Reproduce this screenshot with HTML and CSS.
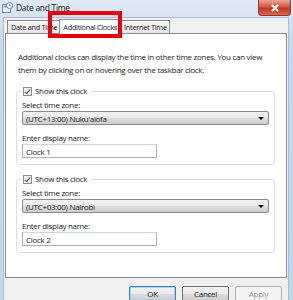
FILE: index.html
```html
<!DOCTYPE html>
<html lang="en">
<head>
  <meta charset="utf-8" />
  <title>Date and Time</title>
  <link rel="stylesheet" href="styles.css">
</head>
<body>
  <div class="window">
    <div class="titlebar">
      <svg class="app-icon" width="11" height="11" viewBox="0 0 11 11">
        <rect x="0.5" y="2.5" width="8" height="8" fill="#e8f1fb" stroke="#6c8fb8"/>
        <rect x="1.5" y="3.5" width="6" height="2" fill="#7aa4d6"/>
        <circle cx="7.5" cy="3.5" r="3" fill="#fff" stroke="#5a7fa8"/>
        <path d="M7.5 2v1.6h1.2" stroke="#5a7fa8" fill="none" stroke-width="0.8"/>
      </svg>
      <span class="title">Date and Time</span>
      <div class="close-btn">
        <svg width="10" height="8" viewBox="0 0 10 8">
          <path d="M2 1l6 6M8 1L2 7" stroke="#fff" stroke-width="2"/>
        </svg>
      </div>
    </div>

    <div class="client">
      <div class="tabs">
        <div class="tab">Date and Time</div>
        <div class="tab active">Additional Clocks</div>
        <div class="tab">Internet Time</div>
      </div>

      <div class="panel">
        <p class="intro">Additional clocks can display the time in other time zones. You can view them by clicking on or hovering over the taskbar clock.</p>

        <fieldset class="group">
          <legend><span class="check"></span>Show this clock</legend>
          <div class="field-label">Select time zone:</div>
          <div class="select">(UTC+13:00) Nuku'alofa<span class="arrow"></span></div>
          <div class="field-label">Enter display name:</div>
          <div class="textbox">Clock 1</div>
        </fieldset>

        <fieldset class="group">
          <legend><span class="check"></span>Show this clock</legend>
          <div class="field-label">Select time zone:</div>
          <div class="select">(UTC+03:00) Nairobi<span class="arrow"></span></div>
          <div class="field-label">Enter display name:</div>
          <div class="textbox">Clock 2</div>
        </fieldset>
      </div>

      <div class="buttons">
        <div class="btn default">OK</div>
        <div class="btn">Cancel</div>
        <div class="btn disabled">Apply</div>
      </div>
    </div>

    <div class="highlight"></div>
  </div>
</body>
</html>
```

FILE: styles.css
```css
* {
  margin: 0;
  padding: 0;
  box-sizing: border-box;
}

body {
  background: #fff;
  font-family: "Open Sans", "Noto Sans", sans-serif;
  font-size: 8px;
  letter-spacing: -0.3px;
  color: #1e1e1e;
}

.window {
  position: relative;
  width: 293px;
  height: 300px;
  overflow: hidden;
  background: linear-gradient(#dfeaf6, #c6d9ee 40px, #c2d6ec);
  padding: 0 4px 0 3px;
  display: flex;
  flex-direction: column;
}

.titlebar {
  height: 17px;
  display: flex;
  align-items: center;
  flex-shrink: 0;
}

.app-icon {
  margin-left: -1px;
  margin-right: 3px;
  margin-top: -3px;
}

.title {
  font-size: 8.5px;
  color: #1b1b1b;
  margin-top: -3px;
}

.close-btn {
  margin-left: auto;
  margin-right: -2px;
  margin-top: -1px;
  width: 33px;
  height: 16px;
  border: 1px solid #8a3a30;
  border-top: none;
  border-radius: 0 0 4px 4px;
  background: linear-gradient(#e8a593, #d35a43 45%, #c2361f 55%, #d56a4e);
  display: flex;
  align-items: center;
  justify-content: center;
}

.client {
  flex: 1;
  background: #f0f0f0;
  border: 1px solid #a9bdd6;
  border-bottom: none;
  padding: 2px 1px 0 1px;
  display: flex;
  flex-direction: column;
}

.tabs {
  display: flex;
  align-items: flex-end;
  height: 13px;
  padding-left: 2px;
  position: relative;
  z-index: 1;
}

.tab {
  height: 13px;
  padding: 0 2px 0 3px;
  border: 1px solid #898c95;
  border-bottom: none;
  border-right: none;
  background: linear-gradient(#f7f7f7, #e6e6e6);
  font-size: 7.4px;
  line-height: 12px;
  color: #1e1e1e;
}

.tab:last-child {
  border-right: 1px solid #898c95;
}

.tab.active {
  height: 15px;
  margin-bottom: -1px;
  background: #fff;
  border-right: 1px solid #898c95;
  padding: 0 3px;
  line-height: 14px;
}

.tab.active + .tab {
  border-left: none;
}

.panel {
  height: 245px;
  background: #fff;
  border: 1px solid #898c95;
  padding: 16px 11px 0 10px;
}

.intro {
  font-size: 8px;
  line-height: 13px;
  color: #1e1e1e;
  padding-left: 2px;
}

.group {
  border: 1px solid #dcdfe6;
  border-radius: 3px;
  padding: 0 5px 6px 5px;
  margin-top: 10px;
}

.group + .group {
  margin-top: 9px;
}

.group legend {
  display: flex;
  align-items: center;
  padding: 0 5px 0 1px;
  font-size: 8px;
  line-height: 10px;
}

.check {
  width: 9px;
  height: 9px;
  border: 1px solid #8f8f8f;
  background: linear-gradient(#f2f2f2, #fff);
  margin-right: 3px;
  position: relative;
}

.check::after {
  content: "";
  position: absolute;
  left: 2px;
  top: 0px;
  width: 2px;
  height: 5px;
  border: solid #3a4f7a;
  border-width: 0 1.5px 1.5px 0;
  transform: rotate(40deg);
}

.field-label {
  font-size: 8px;
  line-height: 10px;
  margin-top: 4px;
  margin-bottom: 1px;
}

.select {
  height: 14px;
  border: 1px solid #8a8a8a;
  border-radius: 2px;
  background: linear-gradient(#f2f2f2, #ebebeb 50%, #dddddd 51%, #cfcfcf);
  display: flex;
  align-items: center;
  padding-left: 3px;
  font-size: 8px;
  margin-bottom: 8px;
}

.arrow {
  margin-left: auto;
  margin-right: 4px;
  width: 0;
  height: 0;
  border-left: 3px solid transparent;
  border-right: 3px solid transparent;
  border-top: 3px solid #000;
}

.textbox {
  width: 135px;
  height: 14px;
  border: 1px solid #abadb3;
  border-top-color: #cfd6e0;
  background: #fff;
  display: flex;
  align-items: center;
  padding-left: 3px;
  font-size: 8px;
}

.buttons {
  display: flex;
  justify-content: flex-end;
  gap: 6px;
  padding: 8px 5px 0 0;
}

.btn {
  width: 47px;
  height: 15px;
  border: 1px solid #707070;
  border-radius: 2px;
  background: linear-gradient(#f2f2f2, #ebebeb 50%, #dddddd 51%, #cfcfcf);
  font-size: 8px;
  display: flex;
  align-items: center;
  justify-content: center;
  color: #1e1e1e;
}

.btn.default {
  border-color: #3c7fb1;
  box-shadow: inset 0 0 0 1px #9fd4f2;
}

.btn.disabled {
  border-color: #adb2b5;
  background: #f4f4f4;
  color: #9a9a9a;
}

.highlight {
  position: absolute;
  z-index: 5;
  left: 48px;
  top: 11px;
  width: 74px;
  height: 27px;
  border: 4px solid #e8000b;
}
```
